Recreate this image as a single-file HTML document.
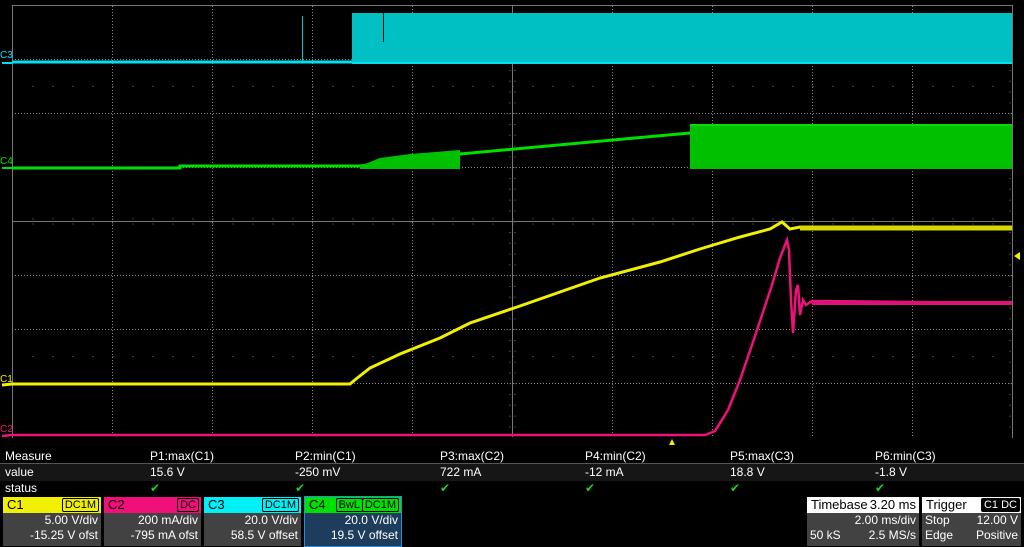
<!DOCTYPE html>
<html><head><meta charset="utf-8"><style>
body{margin:0;background:#000;width:1024px;height:547px;overflow:hidden;position:relative;font-family:"Liberation Sans",sans-serif;color:#fff}
.t{position:absolute;font-size:12px;line-height:14px;white-space:nowrap}
.box{position:absolute;top:497px;height:49px;background:#424242}
.hd{height:16px;font-size:13px;line-height:16px;padding-left:4px;position:relative;color:#000}
.tag{position:absolute;top:1px;height:12px;border:1px solid #000;border-radius:2px;font-size:11px;line-height:12px;padding:0 2px}
.r{text-align:right;padding-right:3px;font-size:12px;line-height:15px}
</style></head><body>
<svg width="1024" height="547" style="position:absolute;left:0;top:0">
<g stroke="#888" stroke-width="1" stroke-dasharray="1,2">
<line x1="112.5" y1="6" x2="112.5" y2="437"/><line x1="212.5" y1="6" x2="212.5" y2="437"/><line x1="312.5" y1="6" x2="312.5" y2="437"/><line x1="412.5" y1="6" x2="412.5" y2="437"/><line x1="612.5" y1="6" x2="612.5" y2="437"/><line x1="712.5" y1="6" x2="712.5" y2="437"/><line x1="812.5" y1="6" x2="812.5" y2="437"/><line x1="912.5" y1="6" x2="912.5" y2="437"/>
<line x1="12" y1="59.5" x2="1012" y2="59.5"/><line x1="12" y1="113.5" x2="1012" y2="113.5"/><line x1="12" y1="167.5" x2="1012" y2="167.5"/><line x1="12" y1="275.5" x2="1012" y2="275.5"/><line x1="12" y1="329.5" x2="1012" y2="329.5"/><line x1="12" y1="383.5" x2="1012" y2="383.5"/>
</g>
<g stroke="#777" stroke-width="1" stroke-dasharray="1,19">
<line x1="32.5" y1="86.5" x2="1012" y2="86.5"/><line x1="32.5" y1="356.5" x2="1012" y2="356.5"/>
</g>
<g stroke="#777" stroke-width="1">
<line x1="12.5" y1="5" x2="12.5" y2="438"/><line x1="12" y1="5.5" x2="1013" y2="5.5"/><line x1="1012.5" y1="5" x2="1012.5" y2="438"/>
<line x1="512.5" y1="6" x2="512.5" y2="437"/><line x1="12" y1="221.5" x2="1012" y2="221.5"/>
</g>
<g stroke="#777" stroke-width="1" stroke-dasharray="1,19">
<line x1="32.5" y1="219" x2="1012" y2="219"/><line x1="32.5" y1="224" x2="1012" y2="224"/>
</g>
<g stroke="#777" stroke-width="1" stroke-dasharray="1,9.8">
<line x1="510" y1="16" x2="510" y2="437"/><line x1="515" y1="16" x2="515" y2="437"/>
<line x1="1010" y1="16" x2="1010" y2="437"/>
</g>
<!-- C3 cyan -->
<rect x="352" y="13" width="660" height="51" fill="#00c0c4"/>
<line x1="12" y1="62" x2="352" y2="62" stroke="#00e0f0" stroke-width="3"/>
<line x1="302.5" y1="16" x2="302.5" y2="61" stroke="#00c8d0" stroke-width="1"/>
<line x1="383.5" y1="13" x2="383.5" y2="42" stroke="#000" stroke-width="1"/>
<line x1="352" y1="63" x2="1012" y2="63" stroke="#00e0f0" stroke-width="2"/>
<line x1="2" y1="63" x2="12" y2="63" stroke="#00e0f0" stroke-width="2"/>
<!-- C4 green -->
<polyline points="12,168 180,168 180,166 360,166 460,154 690,133 780,130" fill="none" stroke="#00e000" stroke-width="3"/>
<polygon points="360,166 380,158 410,154 460,150 460,169 360,169" fill="#00c000"/>
<rect x="690" y="124" width="322" height="45" fill="#00c000"/>
<line x1="690" y1="125" x2="1012" y2="125" stroke="#00e000" stroke-width="2"/>
<line x1="2" y1="168" x2="12" y2="168" stroke="#00e000" stroke-width="2"/>
<!-- C1 yellow -->
<polyline points="2,385 12,384 350,384 356,379 370,368 400,354 440,338 470,323 520,306 560,292 600,278 660,262 700,249 740,237 770,229 782,222 790,229 800,227 1012,228" fill="none" stroke="#f0f000" stroke-width="3"/>
<line x1="800" y1="228" x2="1012" y2="228" stroke="#d8d800" stroke-width="5"/>
<!-- C2 pink -->
<polyline points="2,436 12,435 705,435 715,431 728,410 740,380 752,345 762,315 772,285 780,258 787,240 789,250 791,300 793,333 796,290 798,285 800,315 803,300 806,305 812,301 1012,303" fill="none" stroke="#f0107a" stroke-width="2.5"/>
<line x1="812" y1="303" x2="1012" y2="303" stroke="#e0107a" stroke-width="4"/>
<polygon points="1014,256 1020,252 1020,260" fill="#f0f000"/>
<polygon points="669,445 672,439 675,445" fill="#f0f000"/>
<text x="0" y="58" fill="#00e0f0" font-size="10" font-family="Liberation Sans">C3</text>
<text x="0" y="164" fill="#00e000" font-size="10" font-family="Liberation Sans">C4</text>
<text x="0" y="382" fill="#f0f000" font-size="10" font-family="Liberation Sans">C1</text>
<text x="0" y="432" fill="#f0107a" font-size="10" font-family="Liberation Sans">C2</text>
</svg>
<div style="position:absolute;left:0;top:463px;width:1024px;height:17px;background:#161616;border-top:1px solid #555"></div>
<div class="t" style="left:5px;top:449px">Measure</div>
<div class="t" style="left:5px;top:465px">value</div>
<div class="t" style="left:5px;top:481px">status</div>
<div class="t" style="left:150px;top:449px">P1:max(C1)</div><div class="t" style="left:150px;top:465px">15.6 V</div>
<div class="t" style="left:295px;top:449px">P2:min(C1)</div><div class="t" style="left:295px;top:465px">-250 mV</div>
<div class="t" style="left:440px;top:449px">P3:max(C2)</div><div class="t" style="left:440px;top:465px">722 mA</div>
<div class="t" style="left:585px;top:449px">P4:min(C2)</div><div class="t" style="left:585px;top:465px">-12 mA</div>
<div class="t" style="left:730px;top:449px">P5:max(C3)</div><div class="t" style="left:730px;top:465px">18.8 V</div>
<div class="t" style="left:875px;top:449px">P6:min(C3)</div><div class="t" style="left:875px;top:465px">-1.8 V</div>
<div class="t" style="left:150px;top:481px;color:#20d020">✔</div><div class="t" style="left:295px;top:481px;color:#20d020">✔</div><div class="t" style="left:440px;top:481px;color:#20d020">✔</div><div class="t" style="left:585px;top:481px;color:#20d020">✔</div><div class="t" style="left:730px;top:481px;color:#20d020">✔</div><div class="t" style="left:875px;top:481px;color:#20d020">✔</div>

<div class="box" style="left:3px;width:98px"><div class="hd" style="background:#f0f000">C1<span class="tag" style="right:2px;color:#000">DC1M</span></div><div class="r">5.00 V/div</div><div class="r">-15.25 V ofst</div></div>
<div class="box" style="left:104px;width:97px"><div class="hd" style="background:#f0107a">C2<span class="tag" style="right:2px">DC</span></div><div class="r">200 mA/div</div><div class="r">-795 mA ofst</div></div>
<div class="box" style="left:204px;width:97px"><div class="hd" style="background:#00f0f8">C3<span class="tag" style="right:2px">DC1M</span></div><div class="r">20.0 V/div</div><div class="r">58.5 V offset</div></div>
<div class="box" style="left:304px;width:96px;background:#1e3c5c;border:1px solid #2a8ce0;top:496px"><div class="hd" style="background:#00e000">C4<span class="tag" style="right:38px">BwL</span><span class="tag" style="right:2px">DC1M</span></div><div class="r">20.0 V/div</div><div class="r">19.5 V offset</div></div>

<div class="box" style="left:807px;width:112px"><div class="hd" style="background:#fff">Timebase<span style="position:absolute;right:3px">3.20 ms</span></div><div class="r">2.00 ms/div</div><div class="r" style="position:relative"><span style="position:absolute;left:3px">50 kS</span>2.5 MS/s</div></div>
<div class="box" style="left:922px;width:99px"><div class="hd" style="background:#fff">Trigger<span class="tag" style="right:20px;background:#000;color:#fff">C1</span><span class="tag" style="right:1px;background:#000;color:#fff">DC</span></div><div class="r" style="position:relative"><span style="position:absolute;left:3px">Stop</span>12.00 V</div><div class="r" style="position:relative"><span style="position:absolute;left:3px">Edge</span>Positive</div></div>
</body></html>
